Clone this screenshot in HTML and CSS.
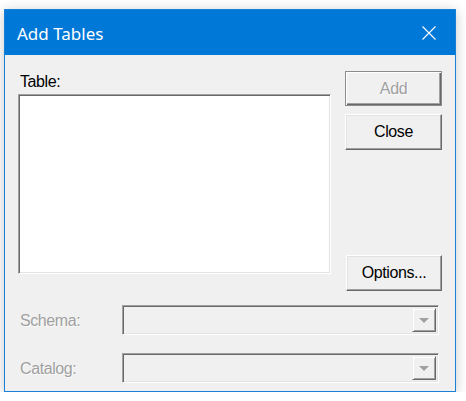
FILE: index.html
```html
<!DOCTYPE html>
<html>
<head>
<meta charset="utf-8">
<link rel="stylesheet" href="styles.css">
</head>
<body>
<div class="window">
  <div class="titlebar">
    <span class="title">Add Tables</span>
    <svg class="close-x" width="14" height="14" viewBox="0 0 14 14"><path d="M0.5 0.5 L13.5 13.5 M13.5 0.5 L0.5 13.5" stroke="#fff" stroke-width="1.1" fill="none"/></svg>
  </div>
  <div class="content">
    <div class="top">
      <div class="left">
        <div class="label">Table:</div>
        <div class="listbox"></div>
      </div>
      <div class="right">
        <div class="btn btn-default disabled">Add</div>
        <div class="btn btn-close">Close</div>
        <div class="btn btn-options">Options...</div>
      </div>
    </div>
    <div class="row row-schema">
      <div class="row-label disabled">Schema:</div>
      <div class="combo">
        <div class="combo-btn"><span class="arrow"></span></div>
      </div>
    </div>
    <div class="row row-catalog">
      <div class="row-label disabled">Catalog:</div>
      <div class="combo">
        <div class="combo-btn"><span class="arrow"></span></div>
      </div>
    </div>
  </div>
</div>
</body>
</html>
```
FILE: styles.css
```css
html, body {
  margin: 0;
  padding: 0;
  background: #ffffff;
}
body {
  padding: 9px 0 0 4px;
  font-family: "Liberation Sans", Arial, sans-serif;
  font-size: 16px;
  letter-spacing: -0.4px;
  color: #000;
}
.window {
  box-sizing: border-box;
  width: 452px;
  height: 383px;
  border: 1px solid #1a7fd6;
  background: #f0f0f0;
  box-shadow: 0 2px 12px rgba(0, 0, 0, 0.22);
  display: flex;
  flex-direction: column;
}
.titlebar {
  height: 45px;
  background: #0078d7;
  display: flex;
  align-items: center;
  justify-content: space-between;
  padding: 0 19px 0 12px;
  flex: none;
}
.title {
  font-family: "Noto Sans", "Open Sans", sans-serif;
  font-size: 17px;
  letter-spacing: 0;
  color: #fff;
  padding-top: 1px;
}
.close-x {
  display: block;
}
.content {
  padding: 16px 0 0 13px;
}
.top {
  display: flex;
  height: 220px;
}
.left {
  width: 313px;
  display: flex;
  flex-direction: column;
}
.label {
  height: 23px;
  line-height: 21px;
  padding-left: 2px;
}
.listbox {
  box-sizing: border-box;
  height: 180px;
  background: #fff;
  border: 1px solid;
  border-color: #a0a0a0 #ffffff #ffffff #a0a0a0;
  box-shadow: inset 1px 1px #696969, inset -1px -1px #e3e3e3;
}
.right {
  margin-left: 14px;
  width: 97px;
  display: flex;
  flex-direction: column;
}
.btn {
  box-sizing: border-box;
  height: 36px;
  display: flex;
  align-items: center;
  justify-content: center;
  background: #f0f0f0;
  border: 1px solid;
  border-color: #ffffff #696969 #696969 #ffffff;
  box-shadow: inset -1px -1px #a0a0a0, inset 1px 1px #e3e3e3;
}
.btn-default {
  height: 35px;
  border: 1px solid #8c8c8c;
  box-shadow: inset 1px 1px #ffffff, inset -1px -1px #696969, inset -2px -2px #a0a0a0;
}
.btn-close {
  margin-top: 8px;
}
.btn-options {
  margin-top: auto;
  margin-left: 1px;
  width: 96px;
}
.disabled {
  color: #a0a0a0;
  text-shadow: 1px 1px 0 rgba(255, 255, 255, 0.8);
}
.row {
  display: flex;
  align-items: center;
}
.row-schema {
  margin-top: 14px;
}
.row-catalog {
  margin-top: 18px;
}
.row-label {
  width: 102px;
  padding-left: 2px;
  padding-top: 1px;
}
.combo {
  box-sizing: border-box;
  width: 317px;
  height: 30px;
  background: #f0f0f0;
  border: 1px solid;
  border-color: #a0a0a0 #ffffff #ffffff #a0a0a0;
  box-shadow: inset 1px 1px #696969, inset -1px -1px #e3e3e3;
  display: flex;
  justify-content: flex-end;
  padding: 2px;
}
.combo-btn {
  box-sizing: border-box;
  width: 24px;
  height: 100%;
  background: #f0f0f0;
  border: 1px solid;
  border-color: #f0f0f0 #696969 #696969 #f0f0f0;
  box-shadow: inset 1px 1px #ffffff, inset -1px -1px #a0a0a0;
  display: flex;
  align-items: center;
  justify-content: center;
}
.arrow {
  width: 0;
  height: 0;
  border-left: 5px solid transparent;
  border-right: 5px solid transparent;
  border-top: 5px solid #a0a0a0;
  margin-top: 1px;
}
```
